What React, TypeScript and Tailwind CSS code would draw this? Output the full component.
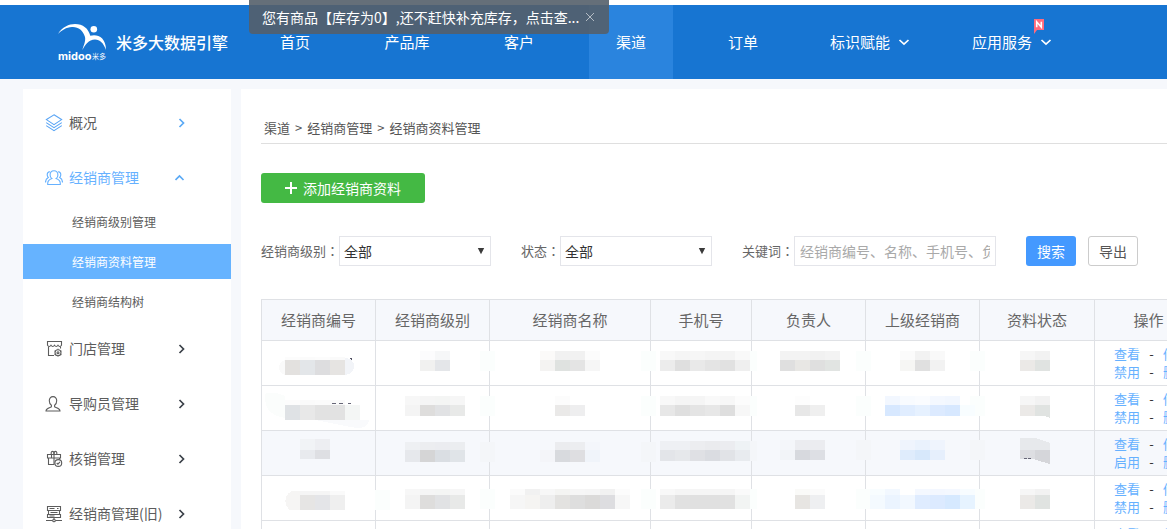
import { useState } from 'react';
import type { ReactNode } from 'react';
import clsx from 'clsx';

/* ---------- icons ---------- */

function Chevron({ dir, className }: { dir: 'right' | 'down' | 'up'; className?: string }) {
  const d = {
    right: 'M4.5 2 8.5 6 4.5 10',
    down: 'M1.5 4 6 8.2 10.5 4',
    up: 'M.5 8 4.5 4 8.5 8',
  }[dir];
  return (
    <svg viewBox="0 0 12 12" fill="none" stroke="currentColor" strokeWidth="1.7" className={clsx('h-3 w-3', className)}>
      <path d={d} />
    </svg>
  );
}

function Icon({ children }: { children: ReactNode }) {
  return (
    <svg viewBox="0 0 18 18" fill="none" stroke="currentColor" strokeWidth="1.1" className="h-[18px] w-[18px] shrink-0">
      {children}
    </svg>
  );
}

const LayersIcon = () => (
  <Icon>
    <path d="M9 .8 16.6 5.6 9 10.6 1.4 5.6Z" />
    <path d="M1.2 8.6 9 13.6l7.8-5" />
    <path d="M1.2 11.6 9 16.6l7.8-5" />
  </Icon>
);

const GroupIcon = () => (
  <Icon>
    <path d="M9 1.7c2.3 0 3.9 1.7 3.9 4.2 0 1.7-.8 3-1.8 3.7 2.3.8 4.2 2.2 4.2 4.8v1.1H2.7v-1.1c0-2.6 1.9-4 4.2-4.8C5.900 8.900 5.100 7.600 5.100 5.900 5.100 3.400 6.700 1.700 9 1.700Z" />
    <path d="M4.800 2.600C2.800 3 2 4.600 2.300 6.400c.1.800.5 1.500 1 2C1.500 9.300.5 10.800.5 13.600" />
    <path d="M13.200 2.600c2 .4 2.800 2 2.500 3.800-.1.800-.5 1.500-1 2 1.800.9 2.800 2.400 2.800 5.200" />
  </Icon>
);

const ShopIcon = () => (
  <Icon>
    <path d="M2.500 1.500h14v3.800c-1 1.500-2.500 1.500-3.500 0-1 1.500-2.500 1.500-3.500 0-1 1.500-2.500 1.500-3.500 0-1 1.500-2.500 1.500-3.500 0Z" />
    <path d="M3.500 6.500v9h5.500M15.500 6.500v2" />
    <circle cx="13" cy="12.700" r="3" />
    <circle cx="13" cy="12.700" r="1" />
    <path d="M13 8.800v1M13 15.600v1M9.600 10.700l.9.500M15.500 14.200l.9.500M9.600 14.700l.9-.5M15.500 11.200l.9-.5" />
  </Icon>
);

const PersonIcon = () => (
  <Icon>
    <path d="M8 1.600c2.300 0 3.800 1.700 3.700 4.200 0 1.900-.8 3.600-2.100 4.500v1.400c0 .8 5.400 1.200 5.400 4.300H1c0-3.100 5.400-3.500 5.400-4.300v-1.400C5.100 9.400 4.300 7.700 4.300 5.800 4.200 3.300 5.700 1.600 8 1.600Z" />
  </Icon>
);

const GiftIcon = () => (
  <Icon>
    <path d="M2.500 4.500h13v3.500h-13ZM3.500 8v6.500h6M9 2v12.500M6.500 4.500v3.500M14.500 8v1.500" />
    <path d="M9 4.500V2.500C8.500 1 6.500 1 6.200 2.500v2M9 2.500c.5-1.500 2.500-1.500 2.800 0v2" />
    <circle cx="13.300" cy="13" r="3.400" />
    <path d="m11.700 13 1.200 1.200 2.100-2.400" />
  </Icon>
);

const ServerIcon = () => (
  <Icon>
    <path d="M2.500 1.500h13v4h-13ZM3.500 5.500v4M14.500 5.500v4M2.500 9.500h13v3h-13ZM9 12.500v1.500" />
    <path d="M4.500 3.500h5M5.500 7.500h7M12 3.500h1.500M4.500 11h5" />
    <path d="M1 15.500h6.500M10.500 15.500H17" />
    <circle cx="9" cy="15.500" r="1.300" />
  </Icon>
);

function Logo() {
  return (
    <div className="flex w-12 flex-col">
      <svg viewBox="0 0 48 27" fill="#fff" className="h-[27px] w-12">
        <path d="M0 10C4 3 11 0 17 0c8 0 13.500 4.500 15.300 11.800C39 9.800 48 13 48 26c-2.500-7-6-10.500-11-10.500-6.500 0-10 5.500-12.500 10.500.5-4 3.500-8 2.500-13C25 6 20 2.600 14 3 8 3.400 4 6 0 10Z" />
        <circle cx="35.800" cy="5.300" r="3.300" />
      </svg>
      <div className="flex items-center justify-between leading-[10px]">
        <span className="font-[Inter] text-[11px] font-bold">midoo</span>
        <span className="text-[7px]">米多</span>
      </div>
    </div>
  );
}

/* ---------- header ---------- */

const NAV: { label: string; active?: boolean; more?: boolean; isNew?: boolean }[] = [
  { label: '首页' },
  { label: '产品库' },
  { label: '客户' },
  { label: '渠道', active: true },
  { label: '订单' },
  { label: '标识赋能', more: true },
  { label: '应用服务', more: true, isNew: true },
];

function Header() {
  return (
    <header className="mt-[5px] flex h-[74px] shrink-0 items-center bg-[#1775d2] pl-[58px] text-white">
      <Logo />
      <span className="ml-2.5 shrink-0 text-[16px] font-medium">米多大数据引擎</span>
      <nav className="ml-[25px] flex h-full gap-7">
        {NAV.map((item) => (
          <a
            key={item.label}
            href="#"
            className={clsx(
              'relative flex items-center justify-center gap-2 whitespace-nowrap text-[15px]',
              item.more ? 'w-[114px]' : 'w-[84px]',
              item.active && 'bg-[#2a84de]'
            )}
          >
            {item.label}
            {item.more && <Chevron dir="down" />}
            {item.isNew && (
              <span className="absolute top-3.5 right-[25px]">
                <svg viewBox="0 0 10 15" className="h-[15px] w-[10px]">
                  <path d="M0 0h10v11H3L0 15Z" fill="#ff6b7d" />
                  <path d="M2.700 8.200V2.800l4.600 5.400V2.800" fill="none" stroke="#fff" strokeWidth="1.600" />
                </svg>
              </span>
            )}
          </a>
        ))}
      </nav>
    </header>
  );
}

function Toast({ onClose }: { onClose: () => void }) {
  return (
    <div className="absolute top-0 left-[249px] z-10 flex h-[34px] w-[360px] items-center rounded-b-[4px] bg-[#545f6a]/90 pl-[13px] text-[14px] text-white">
      <span className="w-[320px] truncate">您有商品【库存为0】,还不赶快补充库存，点击查...</span>
      <button type="button" aria-label="关闭" onClick={onClose} className="ml-[3px]">
        <svg viewBox="0 0 10 10" stroke="#b4bcc4" className="h-2.5 w-2.5">
          <path d="m1 1 8 8M9 1 1 9" />
        </svg>
      </button>
    </div>
  );
}

/* ---------- sidebar ---------- */

const MENU = [
  { label: '概况', icon: <LayersIcon />, blue: true },
  {
    label: '经销商管理',
    icon: <GroupIcon />,
    open: true,
    children: ['经销商级别管理', '经销商资料管理', '经销商结构树'],
  },
  { label: '门店管理', icon: <ShopIcon /> },
  { label: '导购员管理', icon: <PersonIcon /> },
  { label: '核销管理', icon: <GiftIcon /> },
  { label: '经销商管理(旧)', icon: <ServerIcon /> },
];

function Sidebar() {
  const [current, setCurrent] = useState('经销商资料管理');
  return (
    <aside className="w-[208px] shrink-0 bg-white pt-[9px]">
      <ul className="flex flex-col gap-1.5">
        {MENU.map((item) => (
          <li key={item.label}>
            <button
              type="button"
              className={clsx(
                'flex h-[49px] w-full items-center pr-11 pl-[22px] text-[14px]',
                item.open ? 'text-[#66b1ff]' : 'text-[#5c5c5c]'
              )}
            >
              <span className={clsx('mr-1.5', item.blue && 'text-[#5aa5f5]')}>{item.icon}</span>
              {item.label}
              <Chevron
                dir={item.open ? 'up' : 'right'}
                className={clsx('ml-auto', item.blue || item.open ? 'text-[#5aa9f5]' : 'text-[#3a4048]')}
              />
            </button>
            {item.children && (
              <ul className="-mb-px flex flex-col gap-[5px] pt-0.5">
                {item.children.map((sub) => (
                  <li key={sub}>
                    <a
                      href="#"
                      onClick={() => setCurrent(sub)}
                      className={clsx(
                        'flex h-[35px] items-center pl-[49px] text-[12px]',
                        sub === current ? 'bg-[#66b3ff] text-white' : 'text-[#5c5c5c]'
                      )}
                    >
                      {sub}
                    </a>
                  </li>
                ))}
              </ul>
            )}
          </li>
        ))}
      </ul>
    </aside>
  );
}

/* ---------- filters ---------- */

function Label({ htmlFor, children }: { htmlFor: string; children: ReactNode }) {
  return (
    <label htmlFor={htmlFor} className="shrink-0 text-[13px] text-[#666]">
      {children}
      <span className="font-['Noto_Sans_CJK_TC',sans-serif]">：</span>
    </label>
  );
}

function SelectField({ id, label }: { id: string; label: string }) {
  return (
    <div className="mr-[30px] flex items-center">
      <Label htmlFor={id}>{label}</Label>
      <div className="relative">
        <select
          id={id}
          className="block h-[30px] w-[152px] appearance-none rounded-none border border-[#e4e5ea] bg-white pl-1 text-[14px] text-[#333]"
        >
          <option>全部</option>
        </select>
        <svg viewBox="0 0 8 8" fill="#3a3a3a" className="pointer-events-none absolute top-[11px] right-1.5 h-2 w-2">
          <path d="M.8 1h6.400L4 7.200Z" />
        </svg>
      </div>
    </div>
  );
}

function Filters() {
  return (
    <form className="mt-[33px] flex items-center" onSubmit={(e) => e.preventDefault()}>
      <SelectField id="level" label="经销商级别" />
      <SelectField id="status" label="状态" />
      <Label htmlFor="keyword">关键词</Label>
      <input
        id="keyword"
        type="text"
        placeholder="经销商编号、名称、手机号、负责人"
        className="h-[30px] w-[202px] border border-[#e4e5ea] px-[5px] text-[14px] placeholder:text-[#a9a9a9]"
      />
      <button type="submit" className="ml-[30px] h-[30px] w-[50px] rounded-[3px] bg-[#4499ff] text-[14px] text-white">
        搜索
      </button>
      <button
        type="button"
        className="ml-3 h-[30px] w-[50px] rounded-[3px] border border-[#ccc] bg-white text-[14px] text-[#555]"
      >
        导出
      </button>
    </form>
  );
}

/* ---------- table ---------- */

// Masked value: two strips of 15px tiles, x/y count from the cell's top left corner.
interface Mask {
  x: number;
  y: number;
  h: [number, number];
  top: string;
  bottom: string;
  gap?: string; // tile that runs over the cell's right border
  extra?: ReactNode;
}

const TILE = 15;

function Masked({ mask, width }: { mask: Mask; width: number }) {
  const strip = (colors: string, y: number, h: number) =>
    colors
      .split(' ')
      .map((c, i) =>
        c === '-' ? null : <rect key={`${y}-${i}`} x={mask.x + i * TILE} y={y} width={TILE} height={h} fill={`#${c}`} />
      );
  return (
    <svg shapeRendering="crispEdges" className="block h-11 w-full overflow-visible">
      {mask.gap && <rect x={width - 10} y={mask.y} width={TILE} height={mask.h[0] + mask.h[1]} fill={mask.gap} />}
      {strip(mask.top, mask.y, mask.h[0])}
      {strip(mask.bottom, mask.y + mask.h[0], mask.h[1])}
      {mask.extra}
    </svg>
  );
}

const COLUMNS = [
  { title: '经销商编号', width: 114 },
  { title: '经销商级别', width: 114 },
  { title: '经销商名称', width: 161 },
  { title: '手机号', width: 101 },
  { title: '负责人', width: 114 },
  { title: '上级经销商', width: 114 },
  { title: '资料状态', width: 115 },
  { title: '操作', width: 108 },
];

const PALE = '#fbfefd';
const TINT = '#f4f6f9';

const ROWS: { toggle: string; shaded?: boolean; cells: Mask[] }[] = [
  {
    toggle: '禁用',
    cells: [
      {
        x: 23, y: 16, h: [3, 15], top: 'fcfcfc fbfbfb fcfcfc fafafa', bottom: 'e3e1df e3e6e9 dddddf e6e4e2',
        extra: (
          <>
            <path d="M23 19c-8 2-8 13 0 15Z" fill="#fafafa" />
            <path d="M83 17c12 0 12 16 0 17Z" fill="#f2f4f8" />
            <path d="M88 17h2v2h-1Z" fill="#556" />
          </>
        ),
      },
      { x: 44, y: 10, h: [9, 11], top: 'fcfcfd f6f7f8', bottom: 'f1f1f0 e4e6e9', gap: PALE },
      { x: 50, y: 10, h: [9, 11], top: 'fbfaf9 f1f1f1 f1f1f1 fcfcfc', bottom: 'f4f3f2 dfe2e0 e4e4e4 f6f6f6', gap: PALE },
      { x: 9, y: 10, h: [9, 11], top: 'f8f8f8 f5f5f5 f6f6f6 f4f4f4 f4f4f4 f9f9f9', bottom: 'ececec dfdfdf e9e9e9 e4e4e4 e1e1e1 efefef', gap: PALE },
      { x: 28, y: 10, h: [9, 11], top: 'f3f3f3 f3f3f3 f1f1f1 f3f3f3', bottom: 'dfdfdf e8e7e4 dfdfdf e1e4e2', gap: PALE },
      { x: 34, y: 10, h: [9, 11], top: 'fbfbfb f2f2f2 f9f9f9', bottom: 'f6f6f4 e0e0e0 f2f2f2', gap: PALE },
      { x: 40, y: 10, h: [9, 11], top: 'f6f6f6 f2f2f2', bottom: 'ebe9e7 e0e3e1' },
    ],
  },
  {
    toggle: '禁用',
    cells: [
      {
        x: 23, y: 14, h: [5, 15], top: 'fcfcfc fafafa fbfbfb fafafa', bottom: 'dfe2e5 e8e8e8 e2e2e2 e2e2e2 f4f6f5',
        extra: (
          <>
            <path d="M3 8c6-3 13-1 20 2v22C12 30 2 26 3 8Z" fill="#fbfdfc" />
            <path d="M53 34h54c0 8-10 9-18 7Z" fill="#f9fafc" />
            <path d="M70 17h4v1h-4ZM77 17h4v1h-4ZM86 17h3v1h-3Z" fill="#667" />
          </>
        ),
      },
      { x: 29, y: 10, h: [9, 11], top: 'f7f7f7 f5f5f5 f4f5f4 f6f6f6', bottom: 'f4f4f4 dedddc e1e2e4 e8e9e8', gap: PALE },
      { x: 65, y: 10, h: [9, 11], top: 'fcfcfc -', bottom: 'eae9e8 eeeeef', gap: PALE },
      { x: 9, y: 10, h: [9, 11], top: 'f8f8f8 f5f5f5 f5f5f5 f9f9f9 f7f7f7 fcfcfc', bottom: 'e7e7e7 dfdfdf e4e4e4 e7e7e7 dedede f7f7f7', gap: PALE },
      { x: 43, y: 10, h: [9, 11], top: 'fdfdfd -', bottom: 'e7e7e7 efefef', gap: PALE },
      { x: 19, y: 10, h: [9, 11], top: 'f2f7ff f8fbff fafcff f4f8ff f2f7ff', bottom: 'd7e8ff e0edff e6f1ff dceaff d7e8ff f8fdff', gap: PALE },
      { x: 40, y: 10, h: [9, 11], top: 'f6f6f6 f2f2f2', bottom: 'ebe9e7 e0e3e1', extra: <path d="M65 30h5v2Z" fill="#e0e3e1" /> },
    ],
  },
  {
    toggle: '启用',
    shaded: true,
    cells: [
      { x: 38, y: 8, h: [11, 9], top: 'f1f3f6 edeef2', bottom: 'e8eaee dedfe3' },
      { x: 29, y: 11, h: [8, 12], top: 'eef0f3 ecedf0 ebecf0 ebedf0', bottom: 'e6e8ec d5d5d6 dadee3 e0e4e8', gap: TINT },
      { x: 50, y: 11, h: [8, 12], top: '- ebecef ecedf0 f4f6fb', bottom: 'f4f5f9 d8dade dedee1 f0f4fa', gap: TINT },
      { x: 9, y: 10, h: [9, 11], top: 'eef0f4 eef0f4 ecedf0 eaebee ebecf0 eef2f5', bottom: 'e3e5e9 e6e8eb dfe0e4 dadce1 e1e3e7 e8ebef', gap: TINT },
      { x: 28, y: 9, h: [10, 10], top: 'f4f6fa ebecf0 ebecf0', bottom: 'f2f4f8 d7d9de dddfe4', gap: TINT },
      { x: 34, y: 9, h: [10, 10], top: 'eff4fd eaf2fd eff4fd', bottom: 'dfecfc d7e8fb e6effc', gap: TINT },
      {
        x: 40, y: 19, h: [0, 9], top: '-', bottom: 'dddee2 d5d6da',
        extra: (
          <>
            <path d="M40 7h16l14 5v7H40Z" fill="#e7e9ec" />
            <path d="M53 28h17v5Z" fill="#d5d6da" />
            <path d="M44 27h3v1h-3ZM48 27h3v1h-3Z" fill="#667" />
          </>
        ),
      },
    ],
  },
  {
    toggle: '禁用',
    cells: [
      {
        x: 38, y: 15, h: [4, 15], top: 'f5f5f5 f5f5f5 fafafa', bottom: 'e6e5e4 e4e5e8 efefef',
        extra: (
          <>
            <path d="M38 15h-8c-9 4-8 15-2 19h10Z" fill="#f6f5f4" />
            <rect x="113" y="14" width="15" height="20" fill={PALE} />
          </>
        ),
      },
      { x: 29, y: 13, h: [6, 14], top: 'f7f7f7 f5f5f5 f4f5f4 f6f6f6', bottom: 'f4f4f4 dedddc e1e2e4 e8e9e8', gap: PALE },
      {
        x: 20, y: 13, h: [6, 14], gap: PALE,
        top: 'fbfbfb f1f1f1 f7f7f7 f4f4f2 f6f6f6 f5f5f5 f1f1f1 fcfcfc',
        bottom: 'f6f6f6 f5f4f2 eeeeee e3e2e0 dedede dbdad9 dddde0 f7f7f7',
      },
      { x: 9, y: 13, h: [6, 14], top: 'f8f8f8 f5f5f5 f5f5f5 f5f5f5 f5f5f5 fafafa', bottom: 'ebebeb e1e1e1 e0e0e0 e0e0e0 e1e1e1 f2f4f3', gap: PALE },
      { x: 43, y: 13, h: [6, 14], top: 'fafaf8 fbfbfb', bottom: 'e7e5e2 eeeff1', gap: PALE },
      {
        x: 4, y: 13, h: [6, 14], gap: PALE,
        top: 'f8fdff f2f8ff - f4f8ff f3f7ff f4f8ff f7fcff',
        bottom: 'f4faff ebf4ff f2f8ff dfecff dceaff d6e9ff e6f3ff',
      },
      { x: 40, y: 13, h: [6, 14], top: 'f6f6f6 f2f2f2', bottom: 'ebe9e7 e0e3e1' },
    ],
  },
  { toggle: '禁用', cells: [] },
];

function ActionLine({ items }: { items: [string, string] }) {
  return (
    <div className="flex leading-[18px]">
      <a href="#" className="text-[#66b1ff]">{items[0]}</a>
      <span className="w-[23px] text-center text-[#333]">-</span>
      <a href="#" className="text-[#66b1ff]">{items[1]}</a>
    </div>
  );
}

function DealerTable() {
  return (
    <table className="mt-[33px] w-[942px] table-fixed border-collapse text-[#666]">
      <colgroup>
        {COLUMNS.map((col) => (
          <col key={col.title} style={{ width: col.width }} />
        ))}
      </colgroup>
      <thead>
        <tr className="h-[41px] bg-[#f6f8fc]">
          {COLUMNS.map((col) => (
            <th key={col.title} className="border border-[#dfe1e5] p-0 text-[15px] font-normal">
              {col.title}
            </th>
          ))}
        </tr>
      </thead>
      <tbody>
        {ROWS.map((row, r) => (
          <tr key={r} className={clsx('h-[45px]', row.shaded && 'bg-[#f6f8fc]')}>
            {COLUMNS.slice(0, -1).map((col, c) => (
              <td key={col.title} className="border border-[#dfe1e5] p-0">
                {row.cells[c] && <Masked mask={row.cells[c]} width={col.width} />}
              </td>
            ))}
            <td className="border border-[#dfe1e5] py-0 pr-0 pl-[19px] text-[13px] whitespace-nowrap">
              <ActionLine items={['查看', '修改']} />
              <ActionLine items={[row.toggle, '删除']} />
            </td>
          </tr>
        ))}
      </tbody>
    </table>
  );
}

export default function App() {
  const [toast, setToast] = useState(true);
  return (
    <div className="relative flex h-screen flex-col overflow-hidden bg-white font-['Noto_Sans_CJK_SC',sans-serif]">
      {toast && <Toast onClose={() => setToast(false)} />}
      <Header />
      <div className="flex min-h-0 flex-1 gap-2.5 bg-[#f6f8fc] pt-2.5 pl-[23px]">
        <Sidebar />
        <main className="min-w-0 flex-1 overflow-hidden bg-white pt-6 pl-5">
          <nav className="flex h-[31px] items-center gap-[5px] border-b border-[#dfdfdf] pl-[3px] text-[13px] text-[#555]">
            <a href="#">渠道</a>
            <span>&gt;</span>
            <a href="#">经销商管理</a>
            <span>&gt;</span>
            <span>经销商资料管理</span>
          </nav>
          <button
            type="button"
            className="mt-[29px] flex h-[30px] w-[164px] items-center justify-center gap-1.5 rounded-[3px] bg-[#44b944] text-[14px] text-white"
          >
            <svg viewBox="0 0 12 12" stroke="#fff" strokeWidth="2" className="h-3 w-3">
              <path d="M6 0v12M0 6h12" />
            </svg>
            添加经销商资料
          </button>
          <Filters />
          <DealerTable />
        </main>
      </div>
    </div>
  );
}
